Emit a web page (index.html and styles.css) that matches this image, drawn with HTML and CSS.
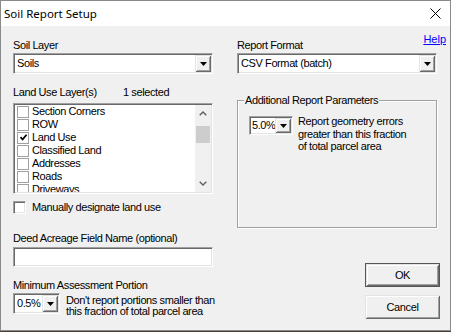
FILE: index.html
```html
<!DOCTYPE html>
<html>
<head>
    <title>Soil Report Setup</title>
    <link rel="stylesheet" href="styles.css">
</head>
<body>
    <div class="dialog">
        <div class="titlebar">
            <span class="title">Soil Report Setup</span>
            <svg class="close" width="11" height="11" viewBox="0 0 11 11">
                <path d="M0.5 0.5L10.5 10.5M10.5 0.5L0.5 10.5" stroke="#000" stroke-width="1"/>
            </svg>
        </div>

        <div class="client">
            <a class="help" href="#">Help</a>

            <!--=======Left column=======-->
            <div class="col">
                <div class="label">Soil Layer</div>
                <div class="combo field">
                    <span class="value">Soils</span>
                    <span class="drop"><svg width="7" height="4" viewBox="0 0 7 4"><path d="M0 0H7L3.5 4Z" fill="#000"/></svg></span>
                </div>

                <div class="layers-head">
                    <span>Land Use Layer(s)</span>
                    <span>1 selected</span>
                </div>
                <div class="listbox field">
                    <div class="items">
                        <div class="item"><span class="check"></span>Section Corners</div>
                        <div class="item"><span class="check"></span>ROW</div>
                        <div class="item"><span class="check"><svg width="9" height="9" viewBox="0 0 9 9"><path d="M1.5 4.2L3.6 6.4L7.6 1.8" stroke="#000" stroke-width="1.7" fill="none"/></svg></span>Land Use</div>
                        <div class="item"><span class="check"></span>Classified Land</div>
                        <div class="item"><span class="check"></span>Addresses</div>
                        <div class="item"><span class="check"></span>Roads</div>
                        <div class="item"><span class="check"></span>Driveways</div>
                    </div>
                    <div class="scrollbar">
                        <div class="arrow"><svg width="8" height="5" viewBox="0 0 8 5"><path d="M0.7 4.3L4 1L7.3 4.3" stroke="#606060" stroke-width="1.4" fill="none"/></svg></div>
                        <div class="track"><div class="thumb"></div></div>
                        <div class="arrow"><svg width="8" height="5" viewBox="0 0 8 5"><path d="M0.7 0.7L4 4L7.3 0.7" stroke="#606060" stroke-width="1.4" fill="none"/></svg></div>
                    </div>
                </div>

                <div class="option">
                    <span class="box"></span>
                    <span>Manually designate land use</span>
                </div>

                <div class="label deed">Deed Acreage Field Name (optional)</div>
                <div class="textbox field"></div>

                <div class="label minimum">Minimum Assessment Portion</div>
                <div class="param">
                    <div class="combo field pct">
                        <span class="value">0.5%</span>
                        <span class="drop"><svg width="7" height="4" viewBox="0 0 7 4"><path d="M0 0H7L3.5 4Z" fill="#000"/></svg></span>
                    </div>
                    <p class="note">Don't report portions smaller than<br>this fraction of total parcel area</p>
                </div>
            </div>

            <!--=======Right column=======-->
            <div class="col">
                <div class="label">Report Format</div>
                <div class="combo field">
                    <span class="value">CSV Format (batch)</span>
                    <span class="drop"><svg width="7" height="4" viewBox="0 0 7 4"><path d="M0 0H7L3.5 4Z" fill="#000"/></svg></span>
                </div>

                <div class="group">
                    <div class="group-title">Additional Report Parameters</div>
                    <div class="param inner">
                        <div class="combo field pct small">
                            <span class="value">5.0%</span>
                            <span class="drop"><svg width="7" height="4" viewBox="0 0 7 4"><path d="M0 0H7L3.5 4Z" fill="#000"/></svg></span>
                        </div>
                        <p class="note">Report geometry errors<br>greater than this fraction<br>of total parcel area</p>
                    </div>
                </div>

                <div class="buttons">
                    <button class="btn default">OK</button>
                    <button class="btn">Cancel</button>
                </div>
            </div>
        </div>
    </div>
</body>
</html>
```

FILE: styles.css
```css
html, body{
    margin: 0;
    background-color: #4a3f35;
}
.dialog{
    width: 451px;
    height: 331px;
    box-sizing: border-box;
    border: 1px solid #8a8a8a;
    background-color: #f0f0f0;
    display: flex;
    flex-direction: column;
    font-family: "Liberation Sans", Arial, sans-serif;
    font-size: 11px;
    letter-spacing: -0.4px;
    color: #000;
}
/*=======Title bar=======*/
.titlebar{
    height: 25px;
    background-color: #fff;
    display: flex;
    align-items: center;
    justify-content: space-between;
    padding: 0 9px 0 3px;
}
.titlebar .title{
    font-family: "Noto Sans", sans-serif;
    font-size: 11.5px;
    letter-spacing: 0;
}
/*=======Client area=======*/
.client{
    position: relative;
    flex: 1;
    display: grid;
    grid-template-columns: 200px 200px;
    column-gap: 24px;
    padding: 13px 12px 0;
}
.help{
    position: absolute;
    top: 7px;
    right: 4px;
    color: #0000ff;
    letter-spacing: 0;
}
.col{
    display: flex;
    flex-direction: column;
}
.label{
    line-height: 13px;
    margin-bottom: 1px;
}
/*=======Sunken fields=======*/
.field{
    box-sizing: border-box;
    background-color: #fff;
    border: 1px solid;
    border-color: #a0a0a0 #fff #fff #a0a0a0;
    box-shadow: inset 1px 1px 0 #696969, inset -1px -1px 0 #e3e3e3;
    padding: 1px;
}
.combo{
    height: 21px;
    display: flex;
    align-items: stretch;
}
.combo .value{
    flex: 1;
    line-height: 17px;
    padding-left: 2px;
    white-space: nowrap;
    overflow: hidden;
}
.combo .drop{
    width: 16px;
    background-color: #f0f0f0;
    display: flex;
    justify-content: center;
    align-items: center;
    box-shadow: inset 1px 1px 0 #e3e3e3, inset -1px -1px 0 #696969, inset 2px 2px 0 #fff, inset -2px -2px 0 #a0a0a0;
}
.combo .drop svg{
    margin-top: 1px;
}
.combo.pct{
    width: 47px;
    flex: none;
}
.combo.small{
    width: 44px;
    height: 19px;
}
.combo.small .value{
    line-height: 15px;
    padding-left: 1px;
}
/*=======Layers list=======*/
.layers-head{
    display: grid;
    grid-template-columns: 110px 1fr;
    line-height: 13px;
    margin-top: 12px;
}
.listbox{
    height: 91px;
    margin-top: 4px;
    display: flex;
    overflow: hidden;
}
.listbox .items{
    flex: 1;
    overflow: hidden;
}
.listbox .item{
    height: 13px;
    line-height: 13px;
    display: flex;
    align-items: center;
}
.listbox .check{
    width: 12px;
    height: 12px;
    box-sizing: border-box;
    border: 1px solid #a0a0a0;
    background-color: #fff;
    margin: 0 3px 0 2px;
    display: flex;
    justify-content: center;
    align-items: center;
}
.scrollbar{
    width: 16px;
    background-color: #f0f0f0;
    display: flex;
    flex-direction: column;
}
.scrollbar .arrow{
    height: 17px;
    display: flex;
    justify-content: center;
    align-items: center;
}
.scrollbar .track{
    flex: 1;
}
.scrollbar .thumb{
    height: 17px;
    margin: 4px 1px 0;
    background-color: #cdcdcd;
}
/*=======Other controls=======*/
.option{
    display: flex;
    align-items: center;
    line-height: 13px;
    margin-top: 7px;
}
.option .box{
    width: 13px;
    height: 13px;
    box-sizing: border-box;
    background-color: #fff;
    border: 1px solid;
    border-color: #a0a0a0 #fff #fff #a0a0a0;
    box-shadow: inset 1px 1px 0 #696969, inset -1px -1px 0 #e3e3e3;
    margin-right: 6px;
}
.label.deed{
    margin-top: 18px;
    margin-bottom: 2px;
}
.textbox{
    height: 20px;
}
.label.minimum{
    margin-top: 12px;
}
.param{
    display: flex;
    align-items: flex-start;
}
.note{
    margin: 2px 0 0 6px;
    line-height: 11px;
    white-space: nowrap;
}
/*=======Group box=======*/
.group{
    height: 128px;
    box-sizing: border-box;
    margin-top: 26px;
    border: 1px solid #a0a0a0;
    box-shadow: inset 1px 1px 0 #fff, 1px 1px 0 #fff;
}
.group-title{
    width: fit-content;
    margin: -7px 0 0 6px;
    padding: 0 1px;
    line-height: 13px;
    background-color: #f0f0f0;
}
.param.inner{
    margin: 9px 0 0 11px;
}
.param.inner .note{
    margin: -1px 0 0 5px;
    line-height: 12.5px;
}
/*=======Buttons=======*/
.buttons{
    display: flex;
    flex-direction: column;
    align-items: flex-end;
    row-gap: 8px;
    margin: 35px -3px 0 0;
}
.btn{
    width: 75px;
    height: 24px;
    box-sizing: border-box;
    border: none;
    background-color: #f0f0f0;
    font-family: "Liberation Sans", Arial, sans-serif;
    font-size: 11px;
    letter-spacing: -0.4px;
    color: #000;
    padding: 0;
    box-shadow: inset 1px 1px 0 #e3e3e3, inset -1px -1px 0 #696969, inset 2px 2px 0 #fff, inset -2px -2px 0 #a0a0a0;
}
.btn.default{
    border: 1px solid #555;
}
```
